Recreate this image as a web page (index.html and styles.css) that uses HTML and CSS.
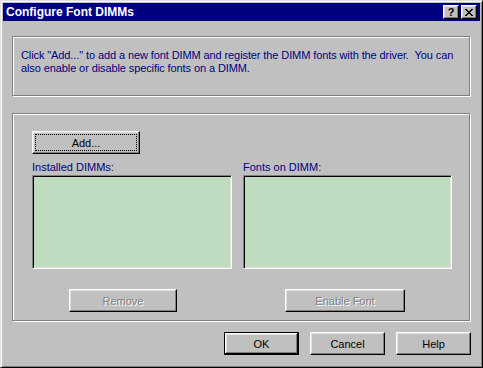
FILE: index.html
```html
<!DOCTYPE html>
<html lang="en">
<head>
<meta charset="UTF-8">
<title>Configure Font DIMMs</title>
<link rel="stylesheet" href="styles.css">
</head>
<body>

<div class="window">
    <div class="titlebar">
        <span class="title">Configure Font DIMMs</span>
        <div class="title-buttons">
            <button class="cap-btn help-cap">?</button>
            <button class="cap-btn">
                <svg width="8" height="7" viewBox="0 0 8 7" shape-rendering="crispEdges">
                    <path d="M0 0h2v1h-2zM6 0h2v1h-2zM1 1h2v1h-2zM5 1h2v1h-2zM2 2h4v1h-4zM3 3h2v1h-2zM2 4h4v1h-4zM1 5h2v1h-2zM5 5h2v1h-2zM0 6h2v1h-2zM6 6h2v1h-2z" fill="#000"/>
                </svg>
            </button>
        </div>
    </div>

    <div class="group intro">
        <p>Click "Add..." to add a new font DIMM and register the DIMM fonts with the driver.&nbsp; You can also enable or disable specific fonts on a DIMM.</p>
    </div>

    <div class="group dimms">
        <button class="btn add-btn"><span class="focus">Add...</span></button>
        <div class="lists">
            <div class="col col-left">
                <div class="label">Installed DIMMs:</div>
                <div class="listbox"></div>
                <button class="btn remove-btn" disabled>Remove</button>
            </div>
            <div class="col col-right">
                <div class="label">Fonts on DIMM:</div>
                <div class="listbox"></div>
                <button class="btn enable-btn" disabled>Enable Font</button>
            </div>
        </div>
    </div>

    <div class="actions">
        <button class="btn default">OK</button>
        <button class="btn">Cancel</button>
        <button class="btn">Help</button>
    </div>
</div>

</body>
</html>
```

FILE: styles.css
```css
body, html {
    margin: 0;
    height: 100%;
    background: #c0c0c0;
    font-family: "Liberation Sans", Arial, sans-serif;
    font-size: 11px;
}
.window {
    width: 483px;
    height: 368px;
    box-sizing: border-box;
    border: 1px solid;
    border-color: #dfdfdf #000 #000 #dfdfdf;
    box-shadow: inset 1px 1px 0 #fff, inset -1px -1px 0 #808080;
    padding: 2px;
    background: #c0c0c0;
}
.titlebar {
    height: 18px;
    background: #000080;
    display: flex;
    align-items: center;
    justify-content: space-between;
    padding-left: 3px;
}
.title {
    color: #fff;
    font-weight: bold;
    font-size: 12px;
}
.title-buttons {
    display: flex;
    gap: 2px;
    margin-right: 3px;
}
.cap-btn {
    width: 16px;
    height: 14px;
    padding: 0;
    margin: 0;
    box-sizing: border-box;
    background: #c0c0c0;
    border: 1px solid;
    border-color: #fff #000 #000 #fff;
    box-shadow: inset -1px -1px 0 #808080, inset 1px 1px 0 #dfdfdf;
    display: flex;
    align-items: center;
    justify-content: center;
    font-family: "Liberation Sans", Arial, sans-serif;
    font-weight: bold;
    font-size: 11px;
    color: #000;
    line-height: 1;
}
.group {
    margin-left: 9px;
    width: 458px;
    box-sizing: border-box;
    border: 1px solid #808080;
    box-shadow: 1px 1px 0 #fff, inset 1px 1px 0 #fff;
}
.intro {
    margin-top: 15px;
    height: 60px;
    padding: 12px 1px 0 8px;
}
.intro p {
    margin: 0;
    color: #000080;
    line-height: 13px;
    letter-spacing: -0.1px;
}
.dimms {
    margin-top: 17px;
    height: 208px;
    padding: 17px 0 0 19px;
}
.btn {
    display: block;
    height: 23px;
    width: 75px;
    margin: 0;
    padding: 0;
    box-sizing: border-box;
    background: #c0c0c0;
    border: 1px solid;
    border-color: #fff #000 #000 #fff;
    box-shadow: inset -1px -1px 0 #808080, inset 1px 1px 0 #dfdfdf;
    font-family: "Liberation Sans", Arial, sans-serif;
    font-size: 11px;
    color: #000;
}
.btn:disabled {
    color: #808080;
    text-shadow: 1px 1px 0 #fff;
}
.btn.default {
    border-color: #000;
    box-shadow: inset -1px -1px 0 #000, inset 1px 1px 0 #fff, inset -2px -2px 0 #808080, inset 2px 2px 0 #dfdfdf;
}
.add-btn {
    width: 108px;
    padding: 2px;
}
.add-btn .focus {
    display: flex;
    align-items: center;
    justify-content: center;
    height: 100%;
    box-sizing: border-box;
    border: 1px dotted #000;
}
.lists {
    display: flex;
    gap: 11px;
}
.col-left {
    width: 200px;
}
.col-right {
    width: 209px;
}
.label {
    color: #000080;
    height: 21px;
    line-height: 13px;
    padding-top: 7px;
    box-sizing: border-box;
}
.listbox {
    height: 94px;
    box-sizing: border-box;
    background: #c0dcc0;
    border: 1px solid;
    border-color: #808080 #fff #fff #808080;
    box-shadow: inset 1px 1px 0 #000, inset -1px -1px 0 #dfdfdf;
}
.remove-btn {
    width: 108px;
    margin: 20px 0 0 37px;
}
.enable-btn {
    width: 120px;
    margin: 20px 0 0 42px;
}
.actions {
    display: flex;
    justify-content: flex-end;
    gap: 11px;
    margin-top: 11px;
    padding-right: 9px;
}
```
